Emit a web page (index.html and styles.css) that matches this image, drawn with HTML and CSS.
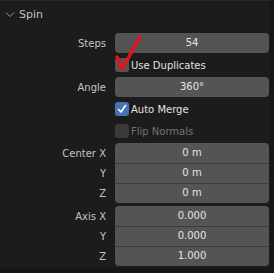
FILE: index.html
```html
<!DOCTYPE html>
<html>

<head>
    <title>Spin</title>
    <link rel="stylesheet" href="styles.css">
</head>

<body>
    <div class="panel">
        <div class="panel_head">
            <svg class="chevron" width="10" height="6" viewBox="0 0 10 6">
                <polyline points="1,0.5 5,4.5 9,0.5" fill="none" stroke="#9a9a9a" stroke-width="1"/>
            </svg>
            <span>Spin</span>
        </div>

        <div class="row">
            <label>Steps</label>
            <div class="field">54</div>
        </div>

        <div class="row">
            <label></label>
            <div class="check">
                <span class="box"></span>
                <span>Use Duplicates</span>
            </div>
        </div>

        <div class="row">
            <label>Angle</label>
            <div class="field">360°</div>
        </div>

        <div class="row">
            <label></label>
            <div class="check">
                <span class="box on">
                    <svg width="14" height="14" viewBox="0 0 14 14">
                        <polyline points="3.5,7.5 6,10 10.5,3.5" fill="none" stroke="#fff" stroke-width="1.6" stroke-linecap="round" stroke-linejoin="round"/>
                    </svg>
                </span>
                <span>Auto Merge</span>
            </div>
        </div>

        <div class="row">
            <label></label>
            <div class="check off">
                <span class="box"></span>
                <span>Flip Normals</span>
            </div>
        </div>

        <div class="group">
            <div class="row">
                <label>Center X</label>
                <div class="field">0 m</div>
            </div>
            <div class="row">
                <label>Y</label>
                <div class="field">0 m</div>
            </div>
            <div class="row">
                <label>Z</label>
                <div class="field">0 m</div>
            </div>
        </div>

        <div class="group">
            <div class="row">
                <label>Axis X</label>
                <div class="field">0.000</div>
            </div>
            <div class="row">
                <label>Y</label>
                <div class="field">0.000</div>
            </div>
            <div class="row">
                <label>Z</label>
                <div class="field">1.000</div>
            </div>
        </div>
    </div>

    <!-- red hand-drawn tick over the Steps field -->
    <svg class="mark" width="274" height="273" viewBox="0 0 274 273">
        <polyline points="117,57 122,69 140,37" fill="none" stroke="#e5121c" stroke-width="3.5" stroke-linecap="round" stroke-linejoin="round"/>
    </svg>
</body>

</html>
```

FILE: styles.css
```css
* {
    margin: 0;
    padding: 0;
    box-sizing: border-box;
}

body {
    background: #161616;
    font-family: "DejaVu Sans", sans-serif;
    font-size: 10px;
    width: 274px;
    height: 273px;
    overflow: hidden;
    position: relative;
}

.panel {
    background: #1c1c1c;
    border-top: 1px solid #2a2a2a;
    width: 270px;
    height: 268px;
}

.panel_head {
    height: 32px;
    display: flex;
    align-items: flex-start;
    padding: 7px 0 0 5px;
    color: #c2c2c2;
    font-size: 11px;
    gap: 4px;
}

.panel_head .chevron {
    margin-top: 4px;
}

.row {
    display: flex;
    height: 20px;
    margin-bottom: 2px;
    align-items: center;
}

.row label {
    width: 107px;
    padding-right: 1px;
    text-align: right;
    color: #c4c4c4;
    margin-right: 8px;
}

.field {
    width: 154px;
    height: 20px;
    background: #545454;
    border-radius: 4px;
    color: #e4e4e4;
    text-align: center;
    line-height: 20px;
}

.check {
    display: flex;
    align-items: center;
    gap: 2px;
    color: #e2e2e2;
}

.check .box {
    width: 14px;
    height: 14px;
    border-radius: 3px;
    background: #545454;
    display: block;
}

.check .box.on {
    background: #4772b3;
}

.check .box svg {
    display: block;
}

.check.off {
    color: #747474;
}

.check.off .box {
    background: #3a3a3a;
}

.group {
    margin-bottom: 3px;
}

.group .row {
    margin-bottom: 0;
}

.group .field {
    border-radius: 0;
    border-top: 1px solid #3c3c3c;
    line-height: 18px;
}

.group .row:first-child .field {
    border-top: none;
    border-radius: 4px 4px 0 0;
    line-height: 20px;
}

.group .row:last-child .field {
    border-radius: 0 0 4px 4px;
}

.mark {
    position: absolute;
    left: 0;
    top: 0;
}
```
